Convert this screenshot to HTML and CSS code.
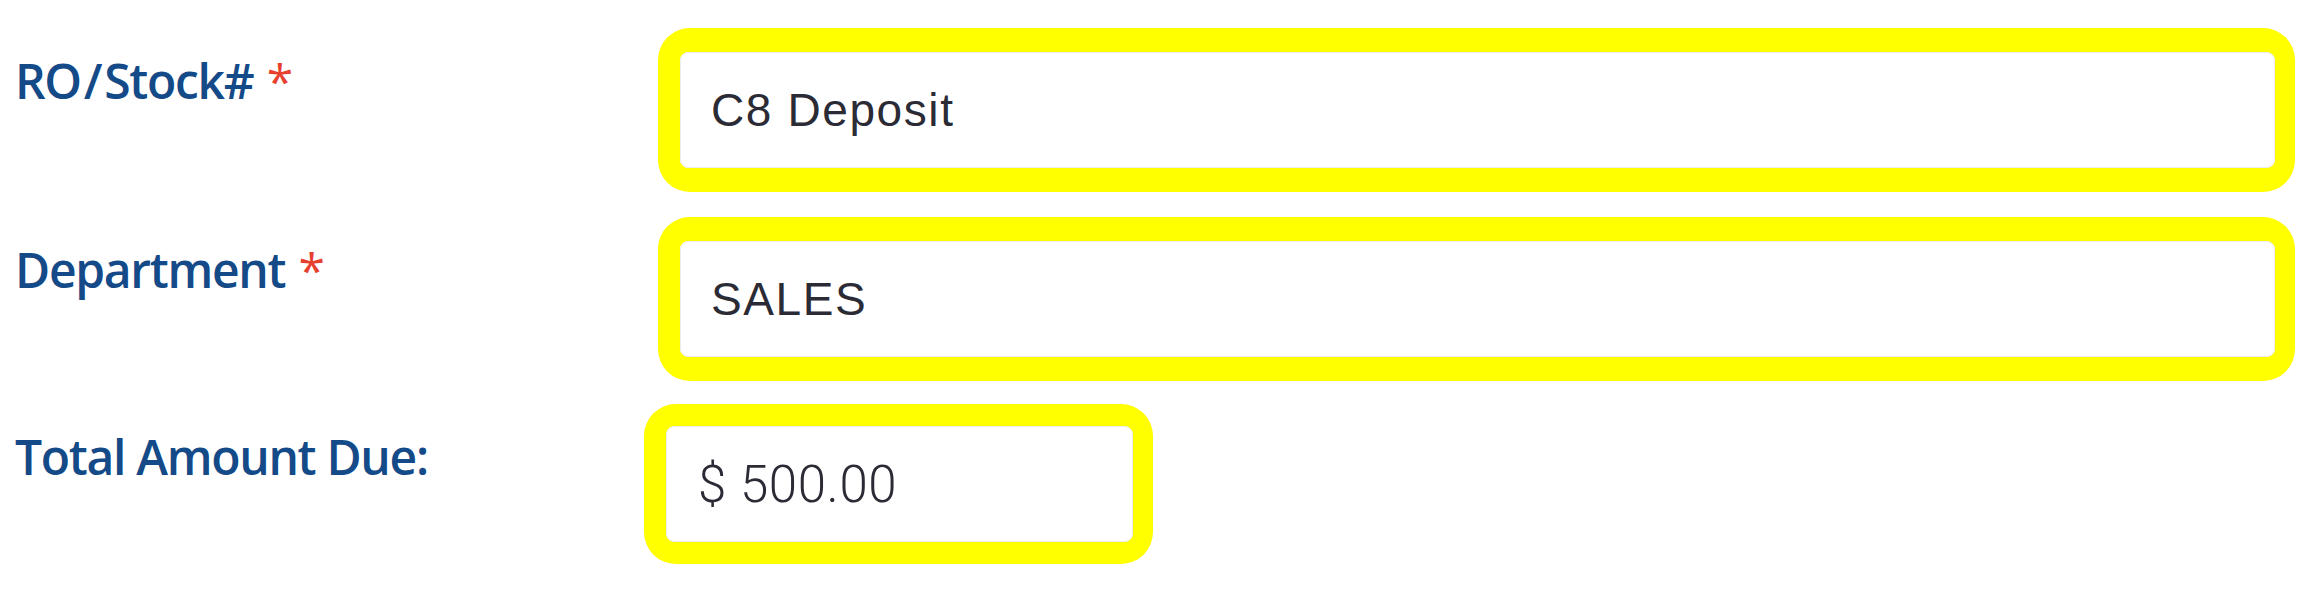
FILE: index.html
```html
<!DOCTYPE html>
<html lang="en">
<head>
  <meta charset="UTF-8">
  <meta name="viewport" content="width=device-width, initial-scale=1.0">
  <title>Deposit</title>
  <link rel="stylesheet" href="styles.css">
</head>
<body>
  <form class="form">
    <div class="row">
      <label class="label" for="roStock">RO<span class="slash">/</span>Stock# <span class="req">*</span></label>
      <div class="highlight wide">
        <input class="field" type="text" id="roStock" value="C8 Deposit" readonly>
      </div>
    </div>

    <div class="row">
      <label class="label" for="department">Department <span class="req">*</span></label>
      <div class="highlight wide">
        <input class="field" type="text" id="department" value="SALES" readonly>
      </div>
    </div>

    <div class="row last">
      <label class="label" for="amount">Total Amount Due:</label>
      <div class="highlight short">
        <input class="field amount" type="text" id="amount" value="$ 500.00" readonly>
      </div>
    </div>
  </form>
</body>
</html>
```

FILE: styles.css
```css
* {
  margin: 0;
  padding: 0;
  box-sizing: border-box;
}

body {
  background: #fff;
  width: 2316px;
  height: 592px;
  overflow: hidden;
}

.form {
  display: flex;
  flex-direction: column;
  gap: 25px;
  padding: 28px 21px 0 0;
}

.row {
  display: grid;
  grid-template-columns: 644px 1fr;
  align-items: start;
}

.row.last {
  margin-top: -2px;
}

.label {
  font-family: 'Open Sans', 'Noto Sans', sans-serif;
  font-weight: 600;
  font-size: 48px;
  letter-spacing: -1.3px;
  line-height: 1;
  color: #134a87;
  padding: 29px 0 0 15px;
}

.slash {
  margin: 0 3px;
}

.req {
  color: #e8402f;
  font-weight: 500;
  margin-left: 2px;
}

.highlight {
  border: 22px solid #ffff00;
  border-top-width: 24px;
  border-bottom-width: 24px;
  border-right-width: 20px;
  border-radius: 32px;
  background: #fff;
}

.highlight.wide {
  margin-left: 14px;
}

.highlight.short {
  width: 509px;
  border-top-width: 22px;
  border-bottom-width: 22px;
}

.field {
  display: block;
  width: 100%;
  height: 116px;
  border: 1px solid #ececec;
  border-radius: 8px;
  background: #fff;
  padding: 0 0 0 30px;
  font-family: 'Liberation Sans', Arial, sans-serif;
  font-size: 46px;
  letter-spacing: 1.6px;
  color: #2b2b35;
  outline: none;
}

.field.amount {
  padding-left: 31px;
  font-family: Roboto, 'Liberation Sans', sans-serif;
  font-weight: 300;
  font-size: 51px;
  letter-spacing: 0.6px;
}
```
